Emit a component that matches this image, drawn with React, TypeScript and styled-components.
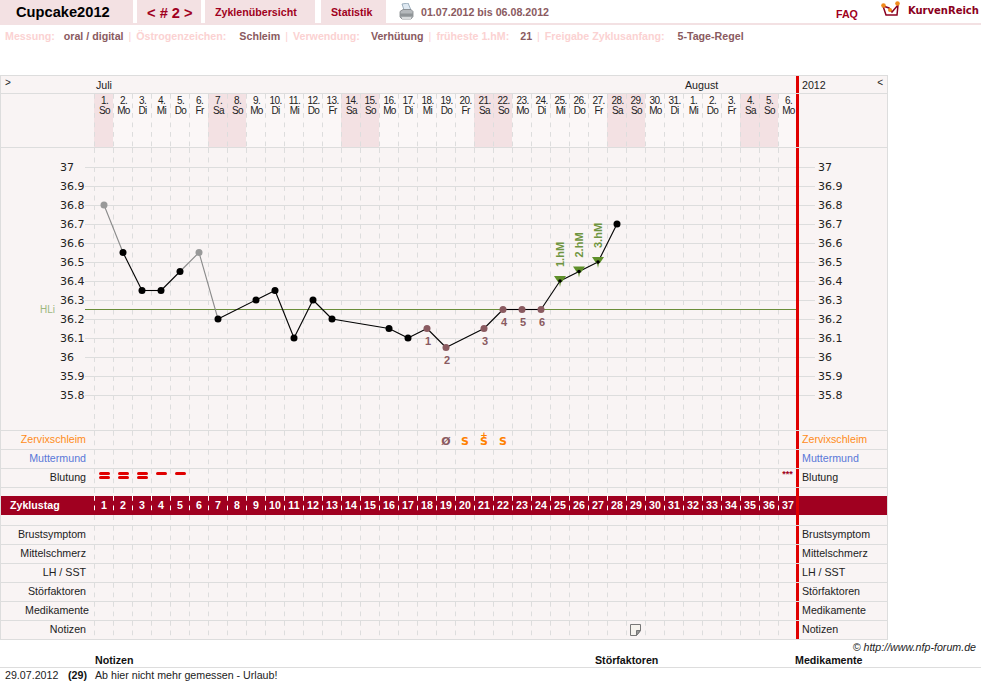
import React from "react";
import styled, { createGlobalStyle } from "styled-components";

const Global = createGlobalStyle`
  html, body { margin: 0; padding: 0; background: #fff; }
  body { font-family: "Liberation Sans", Arial, sans-serif; font-size: 10.67px; color: #222; }
  #root { width: 981px; height: 699px; overflow: hidden; }
`;

const PINK = "#f3e1e3";
const PANEL = "#f9f4f4";
const LINE = "#dddddd";
const WINE = "#a00020";
const BROWN = "#8a5a60";

const TopBar = styled.header`
  display: flex;
  align-items: stretch;
  height: 23px;
  border-bottom: 2px solid ${PINK};
  width: 981px;
`;
const Tab = styled.div<{ $w: number; $ml: number; $pad: number }>`
  width: ${(p) => p.$w}px;
  margin-left: ${(p) => p.$ml}px;
  padding-left: ${(p) => p.$pad}px;
  box-sizing: border-box;
  background: ${PINK};
  color: ${WINE};
  font-weight: bold;
  font-size: 10.67px;
  line-height: 24px;
`;
const TitleTab = styled(Tab)`
  color: #000;
  font-size: 14.67px;
  line-height: 25px;
`;
const CycleTab = styled(Tab)`
  font-size: 14.67px;
  line-height: 26px;
`;
const PrintIcon = styled.svg`
  margin: 3px 0 0 13px;
`;
const DateRange = styled.div`
  margin-left: 7px;
  font-weight: bold;
  color: ${BROWN};
  line-height: 24px;
`;
const Faq = styled.div`
  margin-left: 287px;
  font-weight: bold;
  color: ${WINE};
  line-height: 29px;
`;
const Logo = styled.div`
  display: flex;
  align-items: flex-start;
  margin-left: 23px;
  color: #8a0020;
  font: bold 10px/21px "DejaVu Sans", sans-serif;
  white-space: nowrap;
`;
const LogoMark = styled.svg`
  margin: 1px 6px 0 0;
`;

const InfoRow = styled.div`
  display: flex;
  height: 50px;
  padding: 5px 0 0 5px;
  box-sizing: border-box;
  font-weight: bold;
  line-height: 13px;
`;
const InfoLabel = styled.span`
  color: #fbd2d2;
`;
const InfoValue = styled.span<{ $gap: number }>`
  color: ${BROWN};
  margin-left: ${(p) => p.$gap}px;
`;
const InfoSep = styled.span`
  color: #fbd2d2;
  font-weight: normal;
  margin: 0 5px 0 5px;
`;

const Panel = styled.section`
  width: 888px;
  box-sizing: border-box;
  border: 1px solid ${LINE};
  background: ${PANEL};
`;
const MonthRow = styled.div`
  display: flex;
  height: 17px;
  border-bottom: 1px solid ${LINE};
  line-height: 19px;
  color: #222;
`;
const Toggle = styled.div`
  width: 93px;
  padding-left: 4px;
  box-sizing: border-box;
  font-size: 10px;
  line-height: 14px;
`;
const Month = styled.div<{ $days: number }>`
  width: ${(p) => p.$days * 19}px;
  padding-left: 2px;
  box-sizing: border-box;
`;
const MonthLast = styled(Month)`
  width: ${(p) => p.$days * 19 - 1}px;
`;
const Rule = styled.div`
  flex: none;
  width: 3px;
  background: #e00000;
`;
const SideHead = styled.div`
  flex: 1;
  display: flex;
  justify-content: space-between;
  padding: 0 4px 0 3px;
`;
const SideToggle = styled.span`
  font-size: 10px;
  line-height: 14px;
`;

const Row = styled.div<{ $h: number; $plain?: boolean; $bg?: string }>`
  display: flex;
  height: ${(p) => p.$h}px;
  border-bottom: ${(p) => (p.$plain ? "0" : `1px solid ${LINE}`)};
  background: ${(p) => p.$bg || "transparent"};
  line-height: 17px;
`;
const Label = styled.div<{ $color?: string; $right?: number }>`
  flex: none;
  width: 93px;
  box-sizing: border-box;
  text-align: right;
  white-space: nowrap;
  padding-right: ${(p) => p.$right ?? 8}px;
  color: ${(p) => p.$color || "#222"};
`;
const Side = styled.div<{ $color?: string }>`
  flex: 1;
  padding-left: 3px;
  color: ${(p) => p.$color || "#222"};
`;
const Days = styled.div`
  flex: none;
  display: flex;
  width: 702px;
  overflow: hidden;
`;
const Cell = styled.div<{ $fill?: string; $dash?: string }>`
  position: relative;
  flex: none;
  width: 19px;
  box-sizing: border-box;
  text-align: center;
  background-color: ${(p) => p.$fill || "transparent"};
  background-image: linear-gradient(to bottom, ${(p) => p.$dash || LINE} 0 5px, transparent 5px);
  background-size: 1px 9.5px;
  background-repeat: repeat-y;
`;
const DayCell = styled(Cell)`
  padding: 2px 0 0 2px;
  font-size: 10px;
  line-height: 10px;
  letter-spacing: -0.6px;
  white-space: nowrap;
  color: #222;
`;
const DayBlock = styled.span`
  display: block;
`;
const Symbol = styled.span<{ $color: string }>`
  display: block;
  font: bold 11px/21px "DejaVu Sans", sans-serif;
  color: ${(p) => p.$color};
  padding-left: 1px;
`;
const Plus = styled.span`
  position: absolute;
  left: 0;
  right: -1px;
  top: 0;
  color: #ff8000;
  font: bold 9px/8px "DejaVu Sans", sans-serif;
`;
const BleedWrap = styled.div`
  display: flex;
  flex-direction: column;
  align-items: center;
  gap: 1px;
  padding: 3px 0 0 1px;
`;
const BleedBar = styled.span`
  display: block;
  width: 11px;
  height: 3px;
  border-radius: 2px;
  background: #e00000;
`;
const Stars = styled.span`
  display: block;
  color: ${WINE};
  font-weight: bold;
  font-size: 9px;
  line-height: 9px;
  padding-top: 1px;
`;
const NoteIcon = styled.svg`
  display: block;
  margin: 3px 0 0 4px;
`;
const PlotSvg = styled.svg`
  display: block;
  flex: none;
  font-family: "DejaVu Sans", sans-serif;
`;
const DayLabel = styled(Label)`
  color: #fff;
  font-weight: bold;
  text-align: left;
  padding-left: 9px;
  line-height: 19px;
`;
const DayNumber = styled(Cell)`
  color: #fff;
  font-weight: bold;
  padding-left: 1px;
  line-height: 19px;
`;

const Copyright = styled.div`
  height: 14px;
  padding-right: 5px;
  text-align: right;
  font-style: italic;
  color: #222;
  line-height: 14px;
`;
const NotesHead = styled.div`
  display: grid;
  grid-template-columns: 95px 500px 200px 1fr;
  height: 13px;
  border-bottom: 1px solid ${LINE};
  font-weight: bold;
  line-height: 13px;
  color: #111;
`;
const NotesRow = styled.div`
  display: grid;
  grid-template-columns: 5px 63px 27px 1fr;
  line-height: 15px;
  color: #222;
`;
const Count = styled.b`
  color: #111;
`;

const weekend = (i: number) => [0, 6, 7, 13, 14, 20, 21, 27, 28, 34, 35].includes(i);
const names = ["So", "Mo", "Di", "Mi", "Do", "Fr", "Sa"];
const days = Array.from({ length: 37 }, (_, i) => ({
  n: i < 31 ? i + 1 : i - 30,
  w: names[i % 7],
}));
const cols = Array.from({ length: 37 }, (_, i) => i);

const cx = (d: number) => 94 + (d - 1) * 19 + 10;
const ty = (t: number) => 167 + (37 - t) * 190;

type Pt = { d: number; t: number; k: "b" | "g" | "r" | "m"; l?: string };
const pts: Pt[] = [
  { d: 1, t: 36.8, k: "g" }, { d: 2, t: 36.55, k: "b" }, { d: 3, t: 36.35, k: "b" },
  { d: 4, t: 36.35, k: "b" }, { d: 5, t: 36.45, k: "b" }, { d: 6, t: 36.55, k: "g" },
  { d: 7, t: 36.2, k: "b" }, { d: 9, t: 36.3, k: "b" }, { d: 10, t: 36.35, k: "b" },
  { d: 11, t: 36.1, k: "b" }, { d: 12, t: 36.3, k: "b" }, { d: 13, t: 36.2, k: "b" },
  { d: 16, t: 36.15, k: "b" }, { d: 17, t: 36.1, k: "b" },
  { d: 18, t: 36.15, k: "r", l: "1" }, { d: 19, t: 36.05, k: "r", l: "2" },
  { d: 21, t: 36.15, k: "r", l: "3" }, { d: 22, t: 36.25, k: "r", l: "4" },
  { d: 23, t: 36.25, k: "r", l: "5" }, { d: 24, t: 36.25, k: "r", l: "6" },
  { d: 25, t: 36.4, k: "m", l: "1.hM" }, { d: 26, t: 36.45, k: "m", l: "2.hM" },
  { d: 27, t: 36.5, k: "m", l: "3.hM" }, { d: 28, t: 36.7, k: "b" },
];
const scale = ["37", "36.9", "36.8", "36.7", "36.6", "36.5", "36.4", "36.3", "36.2", "36.1", "36", "35.9", "35.8"];

const Plot = () => (
  <PlotSvg width={795} height={282} viewBox="1 148 795 282">
    {cols.map((i) => (
      <line key={i} x1={94.5 + i * 19} x2={94.5 + i * 19} y1={148} y2={430} stroke={LINE} strokeDasharray="5 4.5" />
    ))}
    {scale.map((s, i) => (
      <g key={s}>
        <line x1={85} x2={796} y1={167.5 + i * 19} y2={167.5 + i * 19} stroke={LINE} />
        <text x={60} y={171 + i * 19} fontSize={11} fill="#222">{s}</text>
      </g>
    ))}
    <line x1={85} x2={796} y1={309.5} y2={309.5} stroke="#6b8e3a" />
    <text x={40} y={313} fontSize={10} fill="#9db77f" fontFamily="Liberation Sans">HLi</text>
    {pts.slice(1).map((p, i) => {
      const a = pts[i];
      const gray = a.k === "g" || p.k === "g";
      return (
        <line key={p.d} x1={cx(a.d)} y1={ty(a.t)} x2={cx(p.d)} y2={ty(p.t)} stroke={gray ? "#8a8a8a" : "#000"} strokeWidth={1.1} />
      );
    })}
    {pts.map((p) => {
      const x = cx(p.d);
      const y = ty(p.t);
      if (p.k === "m")
        return (
          <g key={p.d}>
            <polygon points={`${x - 6},${y - 5} ${x + 6},${y - 5} ${x + 2},${y + 1} ${x + 1},${y + 1} ${x},${y + 6} ${x - 1},${y + 1} ${x - 2},${y + 1}`} fill="#5f8f2a" />
            <circle cx={x} cy={y} r={1.8} fill="#000" />
            <text transform={`translate(${x + 4} ${y - 14}) rotate(-90)`} fontSize={11} fontWeight="bold" fontFamily="Liberation Sans" fill="#6f9440">{p.l}</text>
          </g>
        );
      if (p.k === "r")
        return (
          <g key={p.d}>
            <circle cx={x} cy={y} r={3.5} fill={BROWN} />
            <text x={x + 1} y={y + 16} fontSize={11} fontWeight="bold" fontFamily="Liberation Sans" textAnchor="middle" fill={BROWN}>{p.l}</text>
          </g>
        );
      return <circle key={p.d} cx={x} cy={y} r={3.5} fill={p.k === "g" ? "#999" : "#000"} />;
    })}
  </PlotSvg>
);

const PlotSide = () => (
  <PlotSvg width={88} height={282} viewBox="799 148 88 282">
    {scale.map((s, i) => (
      <g key={s}>
        <line x1={799} x2={815} y1={167.5 + i * 19} y2={167.5 + i * 19} stroke={LINE} />
        <text x={818} y={171 + i * 19} fontSize={11} fill="#222">{s}</text>
      </g>
    ))}
  </PlotSvg>
);

const GridCells = ({ children }: { children?: Record<number, React.ReactNode> }) => (
  <Days>
    {cols.map((i) => (
      <Cell key={i}>{children?.[i]}</Cell>
    ))}
  </Days>
);

const Note = () => (
  <NoteIcon width={11} height={12} viewBox="0 0 11 12">
    <path d="M.5.5h10v6l-4 5h-6z" fill="#f6f3ee" stroke="#777" />
    <path d="M6.5 11.5v-5h4z" fill="#999" stroke="#777" />
  </NoteIcon>
);

const lowerRows: [string, number?][] = [
  ["Brustsymptom"], ["Mittelschmerz"], ["LH / SST"], ["Störfaktoren"], ["Medikamente", 5], ["Notizen"],
];

export default function App() {
  return (
    <>
      <Global />
      <TopBar>
        <TitleTab $w={133} $ml={0} $pad={16}>Cupcake2012</TitleTab>
        <CycleTab $w={64} $ml={4} $pad={10}>&lt; # 2 &gt;</CycleTab>
        <Tab $w={110} $ml={4} $pad={10}>Zyklenübersicht</Tab>
        <Tab $w={65} $ml={6} $pad={10}>Statistik</Tab>
        <PrintIcon width={15} height={18} viewBox="0 0 15 18">
          <path d="M3 1l6-1 3 7H5z" fill="#dfe9f2" stroke="#8aa0b0" strokeWidth=".8" />
          <path d="M1 8.5l3-2h8l2 2v5l-2 2.5H3l-2-2z" fill="#b5b9bc" stroke="#7f8386" strokeWidth=".8" />
          <path d="M1 10.5h13v3H1z" fill="#8f9497" />
          <path d="M3 14h9v2H3z" fill="#d9dcdd" />
        </PrintIcon>
        <DateRange>01.07.2012 bis 06.08.2012</DateRange>
        <Faq>FAQ</Faq>
        <Logo>
          <LogoMark width={21} height={17} viewBox="0 0 21 17">
            <path d="M2 5l3 9h11l1-10-6 7-3-4z" fill="none" stroke="#8a0020" strokeWidth="1.5" />
            <circle cx="2.5" cy="4.5" r="2.3" fill="#f08a1c" />
            <circle cx="9" cy="9" r="2" fill="#f08a1c" />
            <circle cx="16.5" cy="2.5" r="2.3" fill="#f08a1c" />
          </LogoMark>
          KurvenReich
        </Logo>
      </TopBar>
      <InfoRow>
        <InfoLabel>Messung:</InfoLabel>
        <InfoValue $gap={9}>oral / digital</InfoValue>
        <InfoSep>|</InfoSep>
        <InfoLabel>Östrogenzeichen:</InfoLabel>
        <InfoValue $gap={13}>Schleim</InfoValue>
        <InfoSep>|</InfoSep>
        <InfoLabel>Verwendung:</InfoLabel>
        <InfoValue $gap={11}>Verhütung</InfoValue>
        <InfoSep>|</InfoSep>
        <InfoLabel>früheste 1.hM:</InfoLabel>
        <InfoValue $gap={11}>21</InfoValue>
        <InfoSep>|</InfoSep>
        <InfoLabel>Freigabe Zyklusanfang:</InfoLabel>
        <InfoValue $gap={13}>5-Tage-Regel</InfoValue>
      </InfoRow>

      <Panel>
        <MonthRow>
          <Toggle>&gt;</Toggle>
          <Month $days={31}>Juli</Month>
          <MonthLast $days={6}>August</MonthLast>
          <Rule />
          <SideHead>
            2012
            <SideToggle>&lt;</SideToggle>
          </SideHead>
        </MonthRow>
        <Row $h={53}>
          <Label />
          <Days>
            {days.map((d, i) => (
              <DayCell key={i} $fill={weekend(i) ? PINK : "#fbf7f7"}>
                <DayBlock>{d.n}.</DayBlock>
                <DayBlock>{d.w}</DayBlock>
              </DayCell>
            ))}
          </Days>
          <Rule />
          <Side />
        </Row>
        <Row $h={282}>
          <Plot />
          <Rule />
          <PlotSide />
        </Row>
        <Row $h={18}>
          <Label $color="#ff8c1a">Zervixschleim</Label>
          <GridCells>
            {{
              18: <Symbol $color={BROWN}>Ø</Symbol>,
              19: <Symbol $color="#ff8000">S</Symbol>,
              20: <><Plus>+</Plus><Symbol $color="#ff8000">S</Symbol></>,
              21: <Symbol $color="#ff8000">S</Symbol>,
            }}
          </GridCells>
          <Rule />
          <Side $color="#ff8c1a">Zervixschleim</Side>
        </Row>
        <Row $h={18}>
          <Label $color="#5a78d8">Muttermund</Label>
          <GridCells />
          <Rule />
          <Side $color="#5a78d8">Muttermund</Side>
        </Row>
        <Row $h={18}>
          <Label>Blutung</Label>
          <GridCells>
            {{
              0: <BleedWrap><BleedBar /><BleedBar /></BleedWrap>,
              1: <BleedWrap><BleedBar /><BleedBar /></BleedWrap>,
              2: <BleedWrap><BleedBar /><BleedBar /></BleedWrap>,
              3: <BleedWrap><BleedBar /></BleedWrap>,
              4: <BleedWrap><BleedBar /></BleedWrap>,
              36: <Stars>***</Stars>,
            }}
          </GridCells>
          <Rule />
          <Side>Blutung</Side>
        </Row>
        <Row $h={8} $plain>
          <Label />
          <GridCells />
          <Rule />
          <Side />
        </Row>
        <Row $h={19} $plain $bg={WINE}>
          <DayLabel>Zyklustag</DayLabel>
          <Days>
            {cols.map((i) => (
              <DayNumber key={i} $dash="#ffffff">{i + 1}</DayNumber>
            ))}
          </Days>
          <Rule />
          <Side />
        </Row>
        <Row $h={10}>
          <Label />
          <GridCells />
          <Rule />
          <Side />
        </Row>
        {lowerRows.map(([name, right], idx) => (
          <Row key={name} $h={18} $plain={idx === lowerRows.length - 1}>
            <Label $right={right}>{name}</Label>
            <GridCells>{name === "Notizen" ? { 28: <Note /> } : undefined}</GridCells>
            <Rule />
            <Side>{name}</Side>
          </Row>
        ))}
      </Panel>

      <Copyright>© http://www.nfp-forum.de</Copyright>
      <NotesHead>
        <span />
        <span>Notizen</span>
        <span>Störfaktoren</span>
        <span>Medikamente</span>
      </NotesHead>
      <NotesRow>
        <span />
        <span>29.07.2012</span>
        <Count>(29)</Count>
        <span>Ab hier nicht mehr gemessen - Urlaub!</span>
      </NotesRow>
    </>
  );
}
